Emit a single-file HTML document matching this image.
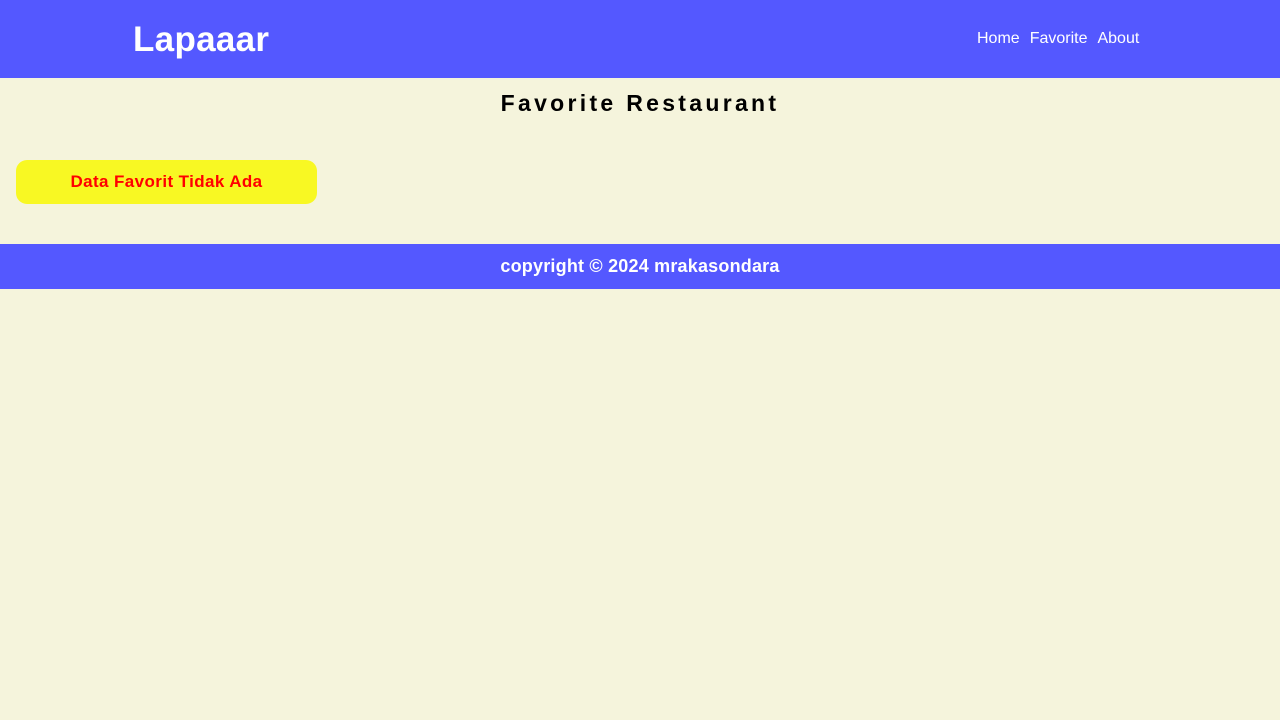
<!DOCTYPE html>
<html><head><style>
*{margin:0;padding:0;box-sizing:border-box}
body{width:1280px;height:720px;background:#f5f4dc;font-family:"Liberation Sans",sans-serif;overflow:hidden}
header{height:78px;background:#5458ff;position:relative}
.logo{position:absolute;left:133px;top:20px;color:#fff;font-weight:bold;font-size:35px;letter-spacing:0.3px}
nav{position:absolute;left:977px;top:30px;color:#fff;font-size:16px}
nav span{margin-right:10px}
h1{text-align:center;font-size:23px;letter-spacing:3.3px;margin-top:12px;height:30px;line-height:26px;color:#000}
.box{position:absolute;left:16px;top:160px;width:301px;height:44px;background:#f8f823;border-radius:11px;color:#f00;font-weight:bold;font-size:17px;text-align:center;line-height:44px;letter-spacing:0.4px}
footer{position:absolute;top:244px;left:0;width:1280px;height:45px;background:#5458ff;color:#fff;font-weight:bold;font-size:18px;text-align:center;line-height:45px;letter-spacing:0.2px}
</style></head><body>
<header><div class="logo">Lapaaar</div><nav><span>Home</span><span>Favorite</span><span>About</span></nav></header>
<h1>Favorite Restaurant</h1>
<div class="box">Data Favorit Tidak Ada</div>
<footer>copyright © 2024 mrakasondara</footer>
</body></html>
